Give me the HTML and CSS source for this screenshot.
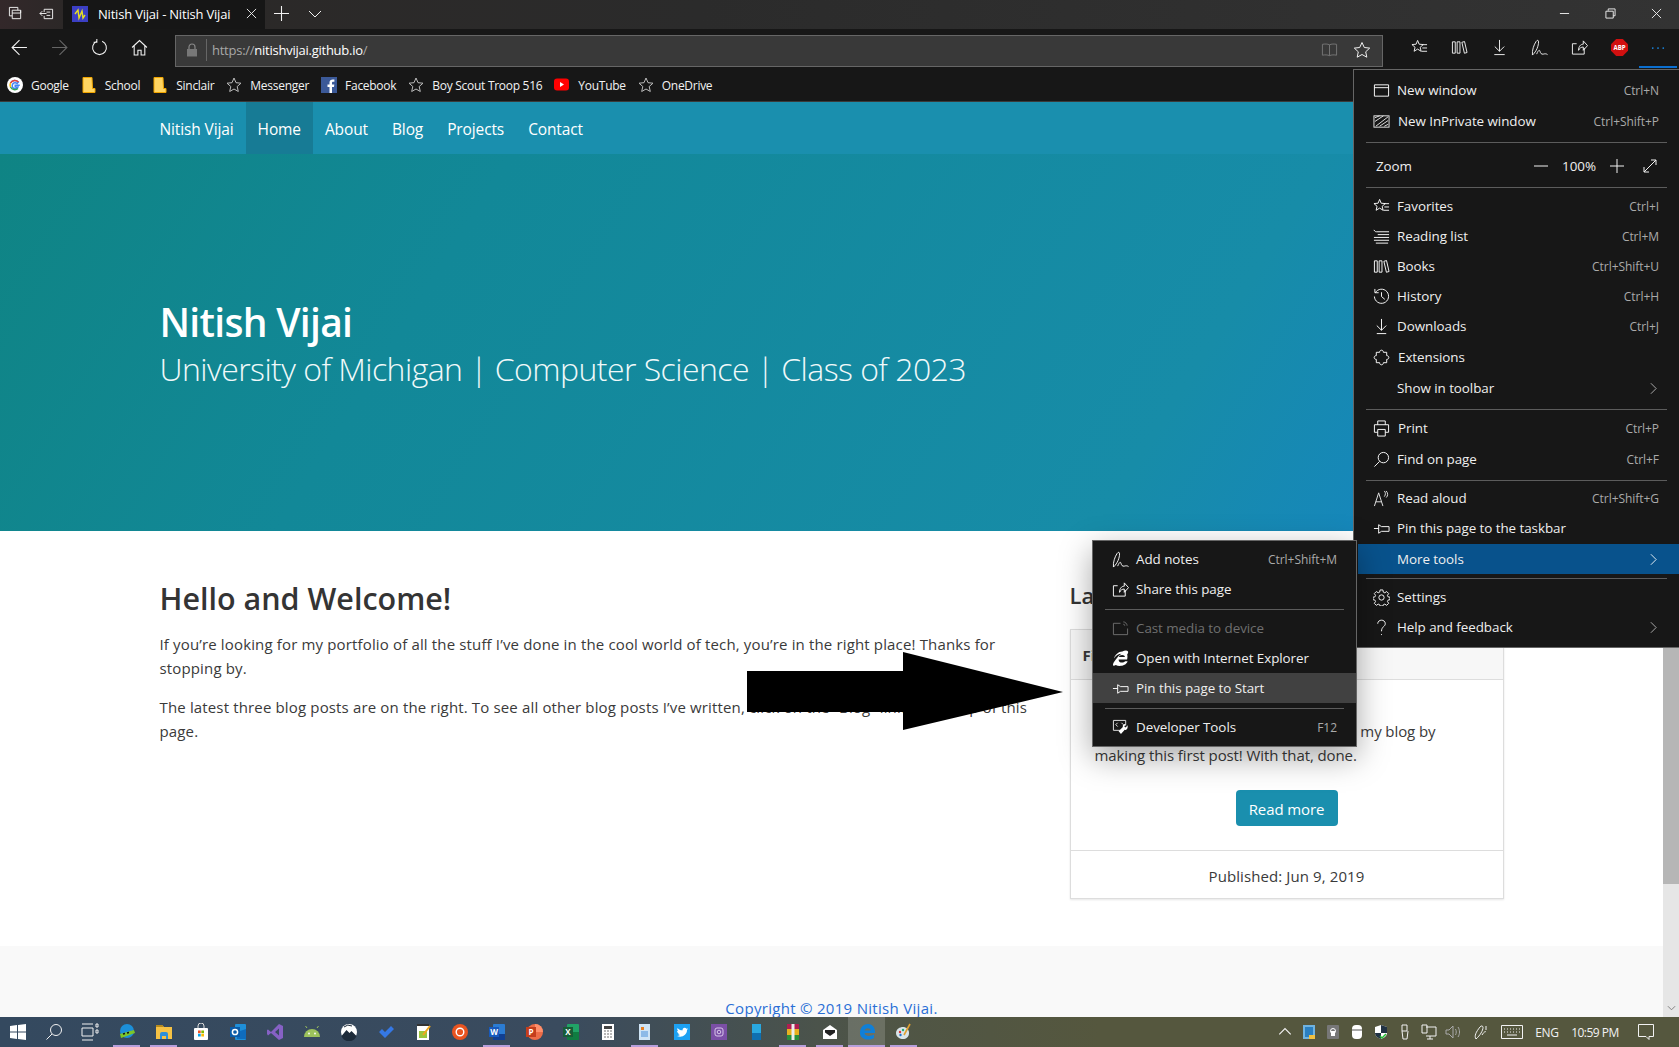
FILE: index.html
```html
<!DOCTYPE html>
<html lang="en">
<head>
<meta charset="utf-8">
<title>Nitish Vijai - Nitish Vijai</title>
<link rel="stylesheet" href="styles.css">
</head>
<body>
<div class="screen">
  <header class="titlebar">
    <span class="tb-btn first"><svg class="ic" viewBox="0 0 16 16"><path d="M1.500 1.500h9v3M1.500 1.500v9h3M4.500 4.500h9v3M4.500 4.500v9h9v-9M4.500 7.500h9"/></svg></span>
    <span class="tb-btn"><svg class="ic" viewBox="0 0 16 16"><path d="M5.500 3.500h9v10h-9v-3M5.500 6.500v-3M8 8H1M3.500 5.500L1 8l2.500 2.500M8 6.500h4M8 10h4"/></svg></span>
    <div class="tab">
      <svg class="favicon" viewBox="0 0 16 16"><rect width="16" height="16" fill="#3b3fc4"/><path d="M3 8l3-4 1 8 3-7 1 7 2-3" fill="none" stroke="#e8e020" stroke-width="1.400"/></svg>
      <span class="tab-title">Nitish Vijai - Nitish Vijai</span>
      <svg class="ic tab-x" viewBox="0 0 12 12"><path d="M1 1l10 10M11 1L1 11"/></svg>
    </div>
    <span class="tb-btn new"><svg class="ic" viewBox="0 0 14 14"><path d="M7 0v14M0 7h14"/></svg></span>
    <span class="tb-btn"><svg class="ic small" viewBox="0 0 14 8"><path d="M1 1l6 6 6-6"/></svg></span>
    <div class="window-controls">
      <span class="win"><svg class="ic" viewBox="0 0 12 12"><path d="M1 6h10"/></svg></span>
      <span class="win"><svg class="ic" viewBox="0 0 12 12"><path d="M3.500 3V1h7.500v7.500H9M1 3.500h8V11H1z"/></svg></span>
      <span class="win"><svg class="ic" viewBox="0 0 12 12"><path d="M1 1l10 10M11 1L1 11"/></svg></span>
    </div>
  </header>

  <div class="toolbar">
    <span class="tool"><svg class="ic" viewBox="0 0 16 16"><path d="M15 8H1M8 1L1 8l7 7"/></svg></span>
    <span class="tool dim"><svg class="ic" viewBox="0 0 16 16"><path d="M1 8h14M8 1l7 7-7 7"/></svg></span>
    <span class="tool"><svg class="ic" viewBox="0 0 16 16"><path d="M10.500 2.200A6.500 6.500 0 1 1 5.500 2.200M5.500 0v3H2.500" /></svg></span>
    <span class="tool"><svg class="ic" viewBox="0 0 16 16"><path d="M1 8l7-6.500L15 8M3 6.500V15h3.500v-4.500h3V15H13V6.500"/></svg></span>
    <div class="address">
      <svg class="lock" viewBox="0 0 12 14"><path d="M3 6V4a3 3 0 0 1 6 0v2" fill="none" stroke="#888" stroke-width="1.200"/><rect x="1" y="6" width="10" height="7.500" fill="#777"/></svg>
      <span class="addr-div"></span>
      <span class="url"><span class="url-dim">https://</span>nitishvijai.github.io<span class="url-dim">/</span></span>
      <svg class="ic reader" viewBox="0 0 18 16"><path d="M9 2.500C7 1.500 4 1.500 1.500 2v11.500C4 13 7 13 9 14c2-1 5-1 7.500-.5V2C14 1.500 11 1.500 9 2.500zM9 2.500V14"/></svg>
      <svg class="ic star" viewBox="0 0 18 18"><path d="M9 1.500l2.300 5 5.400.6-4 3.700 1.100 5.400L9 13.500l-4.800 2.700 1.100-5.400-4-3.700 5.400-.6z"/></svg>
    </div>
    <div class="tool-right">
      <span class="tool"><svg class="ic" viewBox="0 0 18 18"><path d="M7 1.500l1.600 4 4.400.4-3.300 2.900 1 4.200L7 10.700l-3.700 2.300 1-4.200L1 5.900l4.400-.4zM12 6h5M12 9.500h5M11 13h6"/></svg></span>
      <span class="tool"><svg class="ic" viewBox="0 0 18 18"><path d="M1.500 3h3v12h-3zM6.500 3h3v12h-3zM11.500 3.500l2.800-.8L17 14.300l-2.800.8z"/></svg></span>
      <span class="tool"><svg class="ic" viewBox="0 0 18 18"><path d="M9 1v12M4 8l5 5 5-5M3.500 16.500h11"/></svg></span>
      <span class="tool"><svg class="ic" viewBox="0 0 18 18"><path d="M1.500 17C1 12 3 6 5.500 2.500 6.500 1 8 1 8 3c0 4-2 10-6.500 14zM6 16c1.500-4 3-5 3.500-3s1.500 3.500 3.500 3 3-.5 4.500.5"/></svg></span>
      <span class="tool"><svg class="ic" viewBox="0 0 18 18"><path d="M14 9.500V16H1.500V5H6M8 12c0-4 2-6.500 5-6.500V2l4.500 5-4.500 5V8.500c-2 0-4 1-5 3.500z"/></svg></span>
      <span class="tool"><svg class="abp" viewBox="0 0 18 18"><path d="M5.500 0h7L18 5.500v7L12.500 18h-7L0 12.500v-7z" fill="#d11010"/><text x="9" y="11.500" text-anchor="middle" class="abp-text">ABP</text></svg></span>
      <span class="tool more"><svg class="dots" viewBox="0 0 16 4"><circle cx="2" cy="2" r="1" fill="#1a86e0"/><circle cx="8" cy="2" r="1" fill="#1a86e0"/><circle cx="14" cy="2" r="1" fill="#1a86e0"/></svg></span>
    </div>
  </div>

  <nav class="bookmarks">
    <a class="bm"><svg class="bm-ic" viewBox="0 0 16 16"><circle cx="8" cy="8" r="8" fill="#fff"/><path d="M12.800 8.300H8.200v1.800h2.700a3 3 0 1 1-.8-3.700l1.300-1.300A4.900 4.900 0 0 0 3.500 6" fill="none" stroke="#4285f4" stroke-width="1.500"/><path d="M3.500 6a4.900 4.900 0 0 0 0 4" fill="none" stroke="#fbbc05" stroke-width="1.500"/><path d="M3.500 10a4.900 4.900 0 0 0 7.500 1.500" fill="none" stroke="#34a853" stroke-width="1.500"/><path d="M3.500 6A4.900 4.900 0 0 1 11.400 5" fill="none" stroke="#ea4335" stroke-width="1.500"/></svg>Google</a>
    <a class="bm"><svg class="bm-ic" viewBox="0 0 16 16"><path d="M2 .5h9l.5 11H14V15.500H2z" fill="#ffd561" stroke="#f0a500"/></svg>School</a>
    <a class="bm"><svg class="bm-ic" viewBox="0 0 16 16"><path d="M2 .5h9l.5 11H14V15.500H2z" fill="#ffd561" stroke="#f0a500"/></svg>Sinclair</a>
    <a class="bm"><svg class="bm-ic ic" viewBox="0 0 16 16"><path d="M8 1l2 4.700 5 .5-3.800 3.300 1.100 5L8 12l-4.300 2.500 1.100-5L1 6.200l5-.5z"/></svg>Messenger</a>
    <a class="bm"><svg class="bm-ic" viewBox="0 0 16 16"><rect width="16" height="16" fill="#3b5998"/><path d="M11 16v-6h2l.3-2.500H11V6c0-.8.300-1.200 1.200-1.200h1.200V2.600c-2.800-.4-4.900 0-4.900 3V7.500H6.500V10h2v6z" fill="#fff"/></svg>Facebook</a>
    <a class="bm"><svg class="bm-ic ic" viewBox="0 0 16 16"><path d="M8 1l2 4.700 5 .5-3.800 3.300 1.100 5L8 12l-4.300 2.500 1.100-5L1 6.200l5-.5z"/></svg>Boy Scout Troop 516</a>
    <a class="bm"><svg class="bm-ic" viewBox="0 0 16 16"><rect y="1.500" width="15" height="12" rx="3" fill="#f00"/><path d="M6 5l4 2.500L6 10z" fill="#fff"/></svg>YouTube</a>
    <a class="bm"><svg class="bm-ic ic" viewBox="0 0 16 16"><path d="M8 1l2 4.700 5 .5-3.800 3.300 1.100 5L8 12l-4.300 2.500 1.100-5L1 6.200l5-.5z"/></svg>OneDrive</a>
  </nav>

  <div class="viewport">
    <div class="page">
      <div class="site-nav">
        <div class="container nav-row">
          <a class="brand">Nitish Vijai</a>
          <a class="nav-link active">Home</a>
          <a class="nav-link">About</a>
          <a class="nav-link">Blog</a>
          <a class="nav-link">Projects</a>
          <a class="nav-link">Contact</a>
        </div>
      </div>
      <section class="hero">
        <div class="container">
          <h1 class="hero-title">Nitish Vijai</h1>
          <p class="hero-sub">University of Michigan | Computer Science | Class of 2023</p>
        </div>
      </section>
      <main class="container content">
        <div class="intro">
          <h2 class="intro-title">Hello and Welcome!</h2>
          <p class="para">If you’re looking for my portfolio of all the stuff I’ve done in the cool world of tech, you’re in the right place! Thanks for<br>stopping by.</p>
          <p class="para">The latest three blog posts are on the right. To see all other blog posts I’ve written, click on the “Blog” link at the top of this<br>page.</p>
        </div>
        <aside class="side">
          <h3 class="side-title">Latest Posts</h3>
          <article class="card">
            <div class="card-head">First Post</div>
            <div class="card-body">
              <p class="card-text">Hello! I finally got around to beginning my blog by<br>making this first post! With that, done.</p>
              <a class="read-more">Read more</a>
            </div>
            <div class="card-foot">Published: Jun 9, 2019</div>
          </article>
        </aside>
      </main>
      <footer class="site-foot"><a class="copy">Copyright © 2019 Nitish Vijai.</a></footer>
    </div>
    <div class="scrollbar">
      <div class="thumb"></div>
      <svg class="ic sb-arrow" viewBox="0 0 10 6"><path d="M1 1l4 4 4-4"/></svg>
    </div>
  </div>

  <footer class="taskbar">
    <span class="sys"><svg class="task-ic" viewBox="0 0 18 18"><path d="M1 3l7-1v6.500H1zM9 2l8-1v7.500H9zM1 9.500h7V16l-7-1zM9 9.500h8V17l-8-1z" fill="#fff"/></svg></span>
    <span class="sys"><svg class="task-ic ic" viewBox="0 0 18 18"><circle cx="11" cy="7" r="5.500"/><path d="M7 11l-5.500 5.500"/></svg></span>
    <span class="sys"><svg class="task-ic ic" viewBox="0 0 18 18"><path d="M1 1h11M1 17h11M1 5h11v8H1zM15 1h2v3h-2zM15 7h2v3h-2z"/></svg></span>
    <span class="app on"><svg class="task-ic" viewBox="0 0 18 18"><circle cx="9" cy="8" r="7" fill="#1c8fd8"/><path d="M2 11l14-4 1 3-14 5z" fill="#7cc628"/><path d="M5 11l2-.5M9 10l2-.5" stroke="#111" stroke-width="1.500"/></svg></span>
    <span class="app on"><svg class="task-ic" viewBox="0 0 18 18"><path d="M1 2h6l2 2h8v12H1z" fill="#f6c244"/><path d="M1 2h6l2 2H1z" fill="#b58a1f"/><path d="M5 16v-5a2 2 0 0 1 2-2h4a2 2 0 0 1 2 2v5h-2v-3H7v3z" fill="#2d8fd8"/></svg></span>
    <span class="app"><svg class="task-ic" viewBox="0 0 18 18"><rect x="2" y="5" width="14" height="12" rx="1" fill="#fff"/><path d="M6 5V3a3 3 0 0 1 6 0v2" fill="none" stroke="#ddd"/><rect x="6" y="7.500" width="2.700" height="2.700" fill="#f25022"/><rect x="9.300" y="7.500" width="2.700" height="2.700" fill="#7fba00"/><rect x="6" y="10.800" width="2.700" height="2.700" fill="#00a4ef"/><rect x="9.300" y="10.800" width="2.700" height="2.700" fill="#ffb900"/></svg></span>
    <span class="app"><svg class="task-ic" viewBox="0 0 18 18"><rect x="6" y="1" width="11" height="16" rx="1" fill="#1f8fd8"/><path d="M8 9l9-3v10H8z" fill="#0f6cbd"/><rect x="1" y="4" width="10" height="10" fill="#0a5ba8"/><circle cx="6" cy="9" r="2.600" fill="none" stroke="#fff" stroke-width="1.500"/></svg></span>
    <span class="app"><svg class="task-ic" viewBox="0 0 18 18"><path d="M13 1l4 2v12l-4 2-8-7-3 2.500L1 11V7l1-.5L5 9zM13 5.500L9 9l4 3.500z" fill="#8661c5"/></svg></span>
    <span class="app"><svg class="task-ic" viewBox="0 0 18 18"><path d="M1 14a8 8 0 0 1 16 0z" fill="#9cc25c"/><path d="M4 5L2.500 3M14 5l1.500-2" stroke="#9cc25c"/><circle cx="6" cy="10.500" r=".9" fill="#fff"/><circle cx="12" cy="10.500" r=".9" fill="#fff"/></svg></span>
    <span class="app"><svg class="task-ic" viewBox="0 0 18 18"><circle cx="9" cy="9" r="8" fill="#fff"/><path d="M1.500 13l5-6 3 3 2-2 5 5a8 8 0 0 1-15 0z" fill="#1d2b3a"/><path d="M4 4a7 7 0 0 1 8-1" stroke="#1d2b3a" fill="none"/></svg></span>
    <span class="app"><svg class="task-ic" viewBox="0 0 18 18"><path d="M2 9l3-3 3 3 6-6 3 3-9 9z" fill="#3578e5"/></svg></span>
    <span class="app"><svg class="task-ic" viewBox="0 0 18 18"><rect x="3" y="1" width="12" height="16" fill="#fff"/><path d="M3 1h12v2H3z" fill="#333"/><rect x="5" y="8" width="8" height="7" fill="#9bc53d"/><path d="M9 12l7-9" stroke="#f2a61d" stroke-width="2"/></svg></span>
    <span class="app"><svg class="task-ic" viewBox="0 0 18 18"><circle cx="9" cy="9" r="8" fill="#e95420"/><circle cx="9" cy="9" r="3.800" fill="none" stroke="#fff" stroke-width="1.400"/></svg></span>
    <span class="app on"><svg class="task-ic" viewBox="0 0 18 18"><rect x="5" y="1" width="12" height="16" rx="1" fill="#2b7cd3"/><path d="M5 11h12v6H5z" fill="#103f91"/><rect x="1" y="4" width="10" height="10" fill="#185abd"/><text x="6" y="12" text-anchor="middle" class="app-letter">W</text></svg></span>
    <span class="app"><svg class="task-ic" viewBox="0 0 18 18"><circle cx="10" cy="9" r="8" fill="#ed6c47"/><path d="M10 9V1a8 8 0 0 1 8 8z" fill="#ff8f6b"/><rect x="1" y="4" width="10" height="10" fill="#c43e1c"/><text x="6" y="12" text-anchor="middle" class="app-letter">P</text></svg></span>
    <span class="app"><svg class="task-ic" viewBox="0 0 18 18"><rect x="5" y="1" width="12" height="16" rx="1" fill="#21a366"/><path d="M5 9h12v8H5z" fill="#107c41"/><rect x="1" y="4" width="10" height="10" fill="#185c37"/><text x="6" y="12" text-anchor="middle" class="app-letter">X</text></svg></span>
    <span class="app"><svg class="task-ic" viewBox="0 0 18 18"><rect x="3" y="1" width="12" height="16" fill="#fff"/><rect x="5" y="3" width="8" height="3" fill="#444"/><path d="M5.500 8h1M8.500 8h1M11.500 8h1M5.500 11h1M8.500 11h1M11.500 11h1M5.500 14h1M8.500 14h1M11.500 14h1" stroke="#444" stroke-width="1.500"/></svg></span>
    <span class="app on"><svg class="task-ic" viewBox="0 0 18 18"><rect x="3" y="1" width="11" height="16" fill="#cfe4f5"/><rect x="5" y="4" width="3" height="3" fill="#e67e22"/><path d="M5 9h7M5 11h7M5 13h7" stroke="#4a90d9"/></svg></span>
    <span class="app"><svg class="task-ic" viewBox="0 0 18 18"><rect x="1" y="1" width="16" height="16" fill="#1da1f2"/><path d="M4 13c5 2 10-1 10-6l1-1.500-1.500.3c-1.500-2-4.500-.5-3.800 1.500C7.500 7.500 6 6.500 4.500 5c-.5 1.500 0 2.500.8 3.200L4 8c0 1.200.8 2 2 2.500l-1 .1c.4.800 1 1.200 2 1.400-.8.600-2 1-3 1z" fill="#fff"/></svg></span>
    <span class="app"><svg class="task-ic" viewBox="0 0 18 18"><rect x="1" y="1" width="16" height="16" fill="#7b4fa6"/><rect x="5" y="5" width="8" height="8" rx="2" fill="none" stroke="#d8c6ea"/><circle cx="9" cy="9" r="1.800" fill="none" stroke="#d8c6ea"/></svg></span>
    <span class="app"><svg class="task-ic" viewBox="0 0 18 18"><rect x="5" y="1" width="9" height="16" fill="#29a8e0"/><rect x="5" y="10" width="9" height="7" fill="#0f6fb0"/></svg></span>
    <span class="app on"><svg class="task-ic" viewBox="0 0 18 18"><rect x="3" y="1" width="12" height="5" fill="#b01e50"/><rect x="3" y="6" width="12" height="6" fill="#e8b020"/><rect x="3" y="12" width="12" height="5" fill="#2a8f3c"/><rect x="7.500" y="1" width="3" height="16" fill="#eee"/></svg></span>
    <span class="app on"><svg class="task-ic" viewBox="0 0 18 18"><path d="M2 7l7-5 7 5v9H2z" fill="#fff"/><path d="M4 7h10v2.500L9 13 4 9.500z" fill="#222"/></svg></span>
    <span class="app on active-app"><svg class="task-ic" viewBox="0 0 18 18"><path d="M2 10C2 4 6 1 10 1c4 0 7 3 7 8v1H6.500c.3 3 5 4 9.500 1.500V15c-6 3.500-14 1-14-5zM6.700 7.500h6c0-3-5.500-3-6 0z" fill="#0f7fd8"/></svg></span>
    <span class="app on"><svg class="task-ic" viewBox="0 0 18 18"><path d="M1 10c0-4 4-6 7-6s6 2 6 6-3 6-6 6-7-2-7-6z" fill="#d9e4e8"/><circle cx="5" cy="9" r="1.200" fill="#d33"/><circle cx="8" cy="7" r="1.200" fill="#2a7"/><circle cx="5.500" cy="12" r="1.200" fill="#27c"/><path d="M9 12l6-11" stroke="#e0a030" stroke-width="1.600"/></svg></span>
    <div class="tray">
      <span class="tray-item"><svg class="ic tray-ic" viewBox="0 0 14 14"><path d="M2 9l5-5 5 5"/></svg></span>
      <span class="tray-item"><svg class="tray-ic" viewBox="0 0 16 16"><rect x="2" y="1" width="12" height="14" fill="#6fb3e0"/><rect x="4" y="3" width="8" height="10" fill="#2a7fc0"/><rect x="8" y="11" width="6" height="4" fill="#f0c040"/></svg></span>
      <span class="tray-item"><svg class="tray-ic" viewBox="0 0 16 16"><rect x="2" y="1" width="12" height="14" rx="1" fill="#777"/><circle cx="8" cy="7" r="2.500" fill="none" stroke="#fff"/><rect x="6" y="7" width="4" height="5" fill="#fff"/></svg></span>
      <span class="tray-item"><svg class="tray-ic" viewBox="0 0 16 16"><rect x="3" y="1" width="10" height="14" rx="4" fill="#fff"/><path d="M3 6h10" stroke="#555"/></svg></span>
      <span class="tray-item"><svg class="tray-ic" viewBox="0 0 16 16"><path d="M8 1l6 2v6c0 3-3 5-6 6-3-1-6-3-6-6V3z" fill="#fff"/><path d="M8 1v14c-3-1-6-3-6-6h12V3z" fill="#234"/><path d="M7 12l2 2 4-4" stroke="#2b3" stroke-width="1.500" fill="none"/></svg></span>
      <span class="tray-item"><svg class="ic tray-ic" viewBox="0 0 16 16"><path d="M5 1h5v6H5zM5 7l1 8h4l1-8"/></svg></span>
      <span class="tray-item"><svg class="ic tray-ic" viewBox="0 0 16 16"><path d="M5 3h10v9H5M1 1h5v8H1zM9 12v3M6 15h6"/></svg></span>
      <span class="tray-item"><svg class="ic tray-ic faint" viewBox="0 0 16 16"><path d="M1 6h3l4-4v12l-4-4H1zM10.500 5c1 2 1 4 0 6M13 3c2 3 2 7 0 10"/></svg></span>
      <span class="tray-pen"><svg class="ic tray-ic" viewBox="0 0 16 16"><path d="M3 15c-2-3 0-7 4-12 1-1.500 3-1.500 3 .5 0 3-3 8-7 11.500zM9 11c2-3 3-4 4-3M13 2v4"/></svg></span>
      <span class="tray-kbd"><svg class="ic kbd" viewBox="0 0 22 14"><path d="M.5 .5h21v13H.5zM3 4h1M6 4h1M9 4h1M12 4h1M15 4h1M18 4h1M3 7h1M6 7h1M9 7h1M12 7h1M15 7h1M18 7h1M6 10h10"/></svg></span>
      <span class="tray-lang">ENG</span>
      <span class="tray-time">10:59 PM</span>
      <span class="tray-note"><svg class="ic note" viewBox="0 0 18 18"><path d="M1.500 1.500h15v12H12v3l-3-3H1.500z"/></svg></span>
    </div>
  </footer>

  <svg class="arrow" viewBox="0 0 318 80"><polygon points="1,20 157,20 157,1 317,41 157,79 157,61 1,61" fill="#000"/></svg>

  <div class="menu">
    <div class="row"><svg class="ic m-ic" viewBox="0 0 18 14"><path d="M1.500 1h15v12h-15zM1.500 4h15"/></svg><span class="lbl">New window</span><span class="key">Ctrl+N</span></div>
    <div class="row plus"><svg class="m-ic" viewBox="0 0 18 14"><rect x="1" y="1" width="16" height="12" fill="none" stroke="#e8e8e8"/><path d="M2 3l5-2M2 7l9-6M3 12L16 2M7 12l9-6M12 12l4-2" stroke="#e8e8e8"/></svg><span class="lbl lbl-in">New InPrivate window</span><span class="key">Ctrl+Shift+P</span></div>
    <div class="sep sep-a"></div>
    <div class="row zoom-row"><span class="lbl zoom-lbl">Zoom</span>
      <span class="zoom-ctl"><svg class="ic z-ic" viewBox="0 0 14 14"><path d="M0 7h14"/></svg><span class="zoom-val">100%</span><svg class="ic z-ic" viewBox="0 0 14 14"><path d="M0 7h14M7 0v14"/></svg><svg class="ic z-ic" viewBox="0 0 14 14"><path d="M1 13L13 1M8 1h5v5M1 8v5h5"/></svg></span></div>
    <div class="sep sep-b"></div>
    <div class="row"><svg class="ic m-ic" viewBox="0 0 18 18"><path d="M7 1.500l1.600 4 4.400.4-3.300 2.900 1 4.200L7 10.700l-3.700 2.300 1-4.200L1 5.900l4.400-.4zM12 6h5M12 9.500h5M11 13h6"/></svg><span class="lbl">Favorites</span><span class="key">Ctrl+I</span></div>
    <div class="row"><svg class="ic m-ic" viewBox="0 0 18 16"><path d="M1 1c1 2 2 2 3 2h13M5 6h12M1 9h16M1 12h16M3 15h13"/></svg><span class="lbl">Reading list</span><span class="key">Ctrl+M</span></div>
    <div class="row"><svg class="ic m-ic" viewBox="0 0 18 18"><path d="M1.500 3h3v12h-3zM6.500 3h3v12h-3zM11.500 3.500l2.800-.8L17 14.300l-2.800.8z"/></svg><span class="lbl">Books</span><span class="key">Ctrl+Shift+U</span></div>
    <div class="row"><svg class="ic m-ic" viewBox="0 0 18 18"><path d="M2.500 5A7.500 7.500 0 1 1 1.500 9M2 1v4h4M9 4.500V9l3.500 3"/></svg><span class="lbl">History</span><span class="key">Ctrl+H</span></div>
    <div class="row"><svg class="ic m-ic" viewBox="0 0 18 18"><path d="M9 1v12M4 8l5 5 5-5M4 16.500h10"/></svg><span class="lbl">Downloads</span><span class="key">Ctrl+J</span></div>
    <div class="row plus"><svg class="ic m-ic" viewBox="0 0 18 18"><path d="M7 3.500c0-3 4-3 4 0h3.500V7c3 0 3 4 0 4v3.500H11c0 3-4 3-4 0H3.500V11c-3 0-3-4 0-4V3.500z"/></svg><span class="lbl lbl-in">Extensions</span></div>
    <div class="row plus"><span class="m-ic"></span><span class="lbl">Show in toolbar</span><svg class="ic chev" viewBox="0 0 8 14"><path d="M1 1l6 6-6 6"/></svg></div>
    <div class="sep"></div>
    <div class="row"><svg class="ic m-ic" viewBox="0 0 18 18"><path d="M5 5V1h8v4M1.500 5h15v8H13M5 13H1.500V5M5 10h8v7H5z"/></svg><span class="lbl lbl-in">Print</span><span class="key">Ctrl+P</span></div>
    <div class="row plus"><svg class="ic m-ic" viewBox="0 0 18 18"><circle cx="11" cy="7" r="5.500"/><path d="M7 11l-5.500 5.500"/></svg><span class="lbl">Find on page</span><span class="key">Ctrl+F</span></div>
    <div class="sep sep-c"></div>
    <div class="row"><svg class="m-ic" viewBox="0 0 18 18"><path d="M1.500 17L6 3l4.500 14M3 12.500h6" fill="none" stroke="#e8e8e8"/><path d="M12 1c1.500 1.500 1.500 4 0 6M14 1c2 2.500 2 5 0 7" fill="none" stroke="#e8e8e8"/></svg><span class="lbl">Read aloud</span><span class="key">Ctrl+Shift+G</span></div>
    <div class="row"><svg class="ic m-ic" viewBox="0 0 18 12"><path d="M1 6h5M6 2l3 2h8v5H9L6 11V2z"/></svg><span class="lbl">Pin this page to the taskbar</span></div>
    <div class="row plus hot"><span class="m-ic"></span><span class="lbl">More tools</span><svg class="ic chev" viewBox="0 0 8 14"><path d="M1 1l6 6-6 6"/></svg></div>
    <div class="sep sep-d"></div>
    <div class="row"><svg class="ic m-ic" viewBox="0 0 18 18"><circle cx="9" cy="9" r="2.800"/><path d="M7.500 1h3l.4 2.300 1.600.7 2-1.300 2.100 2.100L15.300 6.800l.7 1.600 2 .3v2.600l-2 .4-.7 1.500 1.300 2-2.100 2.100-2-1.300-1.600.7-.4 1.300h-3l-.4-1.300-1.600-.7-2 1.300L1.400 15.200l1.300-2L2 11.700l-2-.4V8.700l2-.3.700-1.600-1.300-2L3.500 2.700l2 1.300L7.100 3.300z"/></svg><span class="lbl">Settings</span></div>
    <div class="row"><svg class="ic m-ic" viewBox="0 0 18 18"><path d="M5 5c0-5 8-5 8 0 0 3-4 3-4 8M9 16v1"/></svg><span class="lbl">Help and feedback</span><svg class="ic chev" viewBox="0 0 8 14"><path d="M1 1l6 6-6 6"/></svg></div>
  </div>

  <div class="submenu">
    <div class="row"><svg class="ic m-ic" viewBox="0 0 18 18"><path d="M1.500 17C1 12 3 6 5.500 2.500 6.500 1 8 1 8 3c0 4-2 10-6.500 14zM6 16c1.500-4 3-5 3.500-3s1.500 3.500 3.500 3 3-.5 4.500.5"/></svg><span class="lbl">Add notes</span><span class="key">Ctrl+Shift+M</span></div>
    <div class="row"><svg class="ic m-ic" viewBox="0 0 18 18"><path d="M14 9.500V16H1.500V5H6M8 12c0-4 2-6.500 5-6.500V2l4.500 5-4.500 5V8.500c-2 0-4 1-5 3.500z"/></svg><span class="lbl">Share this page</span></div>
    <div class="sep"></div>
    <div class="row off"><svg class="ic m-ic" viewBox="0 0 18 16"><path d="M9 2.500H1.500V14.500h15V8M12 1c2 0 4 2 4 4M12 3.500c1 0 1.500.5 1.500 1.500"/></svg><span class="lbl">Cast media to device</span></div>
    <div class="row"><svg class="m-ic" viewBox="0 0 18 18"><path d="M16 10H7c0 4 5 4 7 2h2.500c-1.500 5-9 6-12.500 4-1 .5-3 1-3 0 0-2 1.500-4 3-6C6 7.500 8 5 10 4c-3 0-6 2-8 5 1-4 5-7.500 9-7.500 2-1 5-1.500 6 0 .5 1-.5 2.500-1 3.500.5 1 .5 3 0 5zM7.300 7.500h6.400c0-3-6-3-6.400 0z" fill="#fff"/></svg><span class="lbl">Open with Internet Explorer</span></div>
    <div class="row sel"><svg class="ic m-ic" viewBox="0 0 18 12"><path d="M1 6h5M6 2l3 2h8v5H9L6 11V2z"/></svg><span class="lbl">Pin this page to Start</span></div>
    <div class="sep"></div>
    <div class="row"><svg class="m-ic" viewBox="0 0 18 18"><path d="M12 12H1.500V1.500h13V7" fill="none" stroke="#e8e8e8"/><path d="M6 4L4 6l2 2M10 4l2 2" fill="none" stroke="#e8e8e8"/><path d="M16.500 6.500l-2 2.500L13 8l1.500-2.500c-2-.5-3.500 1-3 3L7 13l2.500 3 4-4.500c2.500.5 3.500-2.500 3-5z" fill="#fff"/></svg><span class="lbl">Developer Tools</span><span class="key">F12</span></div>
  </div>
</div>
</body>
</html>
```
FILE: styles.css
```css
* { box-sizing: border-box; }
html, body { margin: 0; padding: 0; height: 100%; overflow: hidden; }
body { font-family: "Open Sans", "Noto Sans", sans-serif; color: #3a3a3a; background: #fff; }
p, h1, h2, h3 { margin: 0; }
svg { display: block; flex: none; }
.ic { fill: none; stroke: #f2f2f2; stroke-width: 1; }

.screen { position: relative; width: 1679px; height: 1047px; display: flex; flex-direction: column; overflow: hidden; }

/* title bar */
.titlebar { height: 29px; display: flex; align-items: center; color: #fff; font-size: 13px;
  background: linear-gradient(90deg, #33282a 0, #2b2827 70px, #2b2b2b 700px, #333 1679px); }
.tb-btn { width: 33px; height: 27px; margin-bottom: 2px; display: flex; align-items: center; justify-content: center; }
.tb-btn.first { width: 30px; }
.tb-btn .ic { width: 15px; height: 15px; }
.tb-btn .ic.small { width: 14px; height: 8px; }
.tab { width: 202px; height: 29px; background: #161616; display: flex; align-items: center; padding: 0 0 2px 9px; }
.favicon { width: 16px; height: 16px; }
.tab-title { margin-left: 10px; width: 143px; white-space: nowrap; letter-spacing: -.2px; }
.tab-x { width: 11px; height: 11px; margin-left: 5px; }
.window-controls { margin-left: auto; display: flex; }
.win { width: 46px; height: 27px; margin-bottom: 2px; display: flex; align-items: center; justify-content: center; }
.win .ic { width: 11px; height: 11px; }

/* toolbar */
.toolbar { height: 39px; background: #171717; display: flex; align-items: center; margin-left: -1px; width: 1680px; }
.tool { width: 40px; height: 39px; padding-bottom: 2px; display: flex; align-items: center; justify-content: center; }
.tool .ic { width: 17px; height: 17px; }
.tool.dim .ic { stroke: #666; }
.address { width: 1208px; height: 32px; margin: 4px 0 0 16px; padding-bottom: 2px; background: #393939; border: 1px solid #666; display: flex; align-items: center; color: #fff; font-size: 13px; }
.lock { width: 12px; height: 14px; margin-left: 10px; }
.addr-div { width: 1px; height: 22px; background: #666; margin-left: 8px; }
.url { margin-left: 5px; white-space: nowrap; letter-spacing: -.25px; flex: 1; }
.url-dim { color: #a8a8a8; }
.ic.reader { width: 17px; height: 16px; stroke: #777; }
.ic.star { width: 18px; height: 18px; margin: 0 11px 0 15px; }
.tool-right { display: flex; margin-left: 16px; }
.abp { width: 17px; height: 17px; }
.abp-text { font: 700 6.500px "Open Sans", sans-serif; fill: #fff; }
.tool.more { box-shadow: inset 0 -2px 0 #0b6fd0; width: 38px; margin-right: 2px; }
.dots { width: 14px; height: 4px; }

/* bookmarks */
.bookmarks { height: 34px; background: #171717; border-bottom: 1px solid #3a3a3a; display: flex; align-items: center; padding: 1px 0 0 7px; gap: 12px; color: #f2f2f2; font-size: 12px; }
.bm { display: flex; align-items: center; gap: 8px; white-space: nowrap; letter-spacing: -.28px; }
.bm-ic { width: 16px; height: 16px; }
.bm-ic.ic { stroke: #bbb; }

/* page */
.viewport { flex: 1; min-height: 0; display: flex; overflow: hidden; }
.page { flex: 1; min-width: 0; overflow: hidden; }
.container { width: 1344px; margin: 0 auto; }
.site-nav { height: 52px; background: #1a8fae; color: #fff; font-size: 15.500px; }
.nav-row { display: flex; height: 52px; align-items: stretch; }
.brand, .nav-link { display: flex; align-items: center; padding-top: 2px; letter-spacing: -.12px; }
.brand { margin-right: 12px; }
.nav-link { padding-left: 12px; padding-right: 12px; }
.nav-link.active { background: #177b95; }
.hero { height: 377px; display: flex; align-items: center; color: #fff;
  background: linear-gradient(122deg, #0f8484 0, #128898 27%, #178ca8 70%, #1687bb 84%, #1a80cc 100%); }
.hero-title { font-size: 39px; line-height: 50px; font-weight: 600; letter-spacing: -.7px; }
.hero-sub { font-size: 32px; line-height: 38px; font-weight: 300; margin-top: 3px; letter-spacing: -.55px; color: #f0f9fa; }
.content { display: grid; grid-template-columns: 1fr 434px; column-gap: 40px; padding-top: 48px; }
.intro-title { font-size: 30.500px; line-height: 38px; font-weight: 600; color: #343434; margin-bottom: 15px; }
.para { font-size: 15px; line-height: 24px; margin-bottom: 15px; letter-spacing: .15px; white-space: nowrap; }
.side-title { font-size: 22px; line-height: 32px; font-weight: 600; color: #343434; margin-bottom: 18px; }
.card { border: 1px solid #ddd; box-shadow: 0 1px 2px rgba(0,0,0,.1); background: #fff; }
.card-head { height: 50px; background: #f7f7f7; border-bottom: 1px solid #ddd; padding: 0 12px; display: flex; align-items: center; font-weight: 700; font-size: 15px; }
.card-body { padding: 39px 24px 24px; display: flex; flex-direction: column; align-items: center; }
.card-text { font-size: 15px; line-height: 24px; letter-spacing: -.1px; width: 100%; white-space: nowrap; }
.read-more { margin-top: 23px; width: 102px; height: 36px; padding-top: 2px; background: #1a8fae; color: #fff; border-radius: 4px; display: flex; align-items: center; justify-content: center; font-size: 15px; letter-spacing: -.1px; }
.card-foot { height: 48px; padding-top: 2px; border-top: 1px solid #ddd; display: flex; align-items: center; justify-content: center; font-size: 15px; letter-spacing: .1px; }
.site-foot { margin-top: 47px; background: #f9f9f9; height: 120px; padding-top: 50px; text-align: center; font-size: 15px; line-height: 24px; }
.copy { color: #2a6fd6; letter-spacing: .3px; }
.scrollbar { width: 16px; background: #e6e6e6; display: flex; flex-direction: column; align-items: center; }
.thumb { width: 16px; height: 782px; background: #b6b6b6; }
.ic.sb-arrow { width: 9px; height: 6px; margin-top: auto; margin-bottom: 6px; stroke: #777; }

/* taskbar */
.taskbar { height: 30px; display: flex; align-items: center; color: #f2f2f2;
  background: linear-gradient(90deg, #34495f 0, #3a4b5e 560px, #4f5546 880px, #55573e 1100px, #55573e 100%); }
.sys { width: 36px; height: 30px; display: flex; align-items: center; justify-content: center; }
.app { position: relative; width: 37px; height: 30px; display: flex; align-items: center; justify-content: center; }
.app.on::after { content: ""; position: absolute; left: 5px; right: 5px; bottom: 0; height: 2px; background: #b79fdc; }
.active-app { background: rgba(255,255,255,.16); }
.active-app.on::after { left: 0; right: 0; }
.task-ic { width: 18px; height: 18px; }
.app-letter { font: 700 8px "Open Sans", sans-serif; fill: #fff; }
.tray { margin-left: auto; display: flex; align-items: center; padding-right: 10px; font-size: 12px; }
.tray-item { width: 24px; display: flex; justify-content: center; }
.tray-ic { width: 16px; height: 16px; }
.ic.faint { stroke: #aaa; }
.tray-pen { width: 32px; display: flex; justify-content: center; }
.tray-kbd { width: 30px; display: flex; justify-content: center; }
.kbd { width: 22px; height: 14px; }
.tray-lang { width: 40px; text-align: center; letter-spacing: -.3px; }
.tray-time { width: 56px; text-align: center; white-space: nowrap; letter-spacing: -.5px; }
.tray-note { width: 46px; display: flex; justify-content: center; }
.note { width: 18px; height: 18px; }

/* pointer drawn on the shot */
.arrow { position: absolute; left: 746px; top: 651px; width: 318px; height: 80px; }

/* menus */
.menu, .submenu { position: absolute; background: #171717; border: 1px solid #666; color: #efefef; font-size: 13.400px; }
.menu { left: 1353px; top: 69px; width: 326px; height: 579px; padding-top: 5px; border-right: 0; }
.submenu { left: 1092px; top: 540px; width: 265px; height: 207px; padding-top: 3px; box-shadow: 0 10px 30px rgba(0,0,0,.35); }
.row { height: 30px; display: flex; align-items: center; white-space: nowrap; padding: 0 20px 0 19px; }
.row.plus { margin-top: 1px; }
.m-ic { width: 17px; height: 17px; }
.ic.m-ic { stroke: #fff; }
.lbl { margin-left: 7px; letter-spacing: -.05px; }
.lbl-in { margin-left: 8px; }
.key { margin-left: auto; color: #aaa; font-size: 12px; letter-spacing: -.05px; }
.chev { width: 7px; height: 13px; margin-left: auto; margin-right: 2px; }
.ic.chev { stroke: #bbb; }
.hot { background: #08528c; margin-left: 4px; padding-left: 15px; }
.hot .ic.chev { stroke: #fff; }
.sep { height: 1px; background: #5c5c5c; margin: 6px 12px 3px; }
.sep-a { margin-bottom: 8px; }
.sep-b { margin-top: 6px; }
.sep-c { margin-bottom: 2px; }
.sep-d { margin-top: 4px; }
.zoom-row { padding-left: 22px; padding-right: 22px; }
.zoom-lbl { margin-left: 0; }
.zoom-ctl { margin-left: auto; display: flex; align-items: center; }
.z-ic { width: 14px; height: 14px; }
.zoom-val { width: 62px; text-align: center; }
.zoom-ctl .z-ic:last-child { margin-left: 19px; }
.submenu .row { padding: 0 19px; }
.submenu .sep { margin: 5px 12px 3px; }
.off { color: #6f6f6f; }
.ic.m-ic.off, .off .ic.m-ic { stroke: #6f6f6f; }
.sel { background: #414141; }
```
